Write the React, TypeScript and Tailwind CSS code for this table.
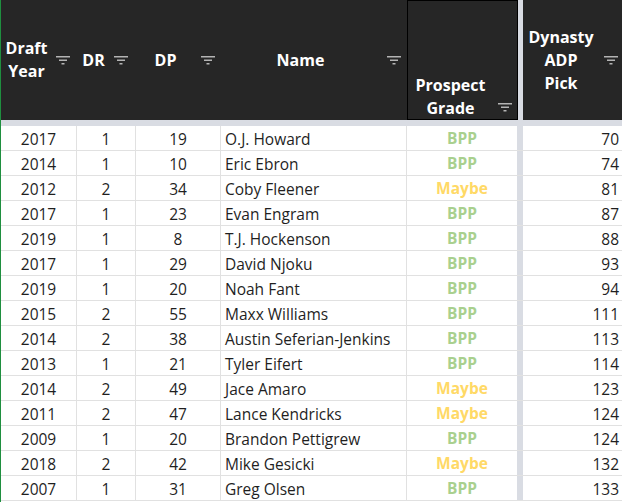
import React from 'react';

type Row = {
  year: number;
  dr: number;
  dp: number;
  name: string;
  grade: 'BPP' | 'Maybe';
  adp: number;
};

const ROWS: Row[] = [
  { year: 2017, dr: 1, dp: 19, name: 'O.J. Howard', grade: 'BPP', adp: 70 },
  { year: 2014, dr: 1, dp: 10, name: 'Eric Ebron', grade: 'BPP', adp: 74 },
  { year: 2012, dr: 2, dp: 34, name: 'Coby Fleener', grade: 'Maybe', adp: 81 },
  { year: 2017, dr: 1, dp: 23, name: 'Evan Engram', grade: 'BPP', adp: 87 },
  { year: 2019, dr: 1, dp: 8, name: 'T.J. Hockenson', grade: 'BPP', adp: 88 },
  { year: 2017, dr: 1, dp: 29, name: 'David Njoku', grade: 'BPP', adp: 93 },
  { year: 2019, dr: 1, dp: 20, name: 'Noah Fant', grade: 'BPP', adp: 94 },
  { year: 2015, dr: 2, dp: 55, name: 'Maxx Williams', grade: 'BPP', adp: 111 },
  { year: 2014, dr: 2, dp: 38, name: 'Austin Seferian-Jenkins', grade: 'BPP', adp: 113 },
  { year: 2013, dr: 1, dp: 21, name: 'Tyler Eifert', grade: 'BPP', adp: 114 },
  { year: 2014, dr: 2, dp: 49, name: 'Jace Amaro', grade: 'Maybe', adp: 123 },
  { year: 2011, dr: 2, dp: 47, name: 'Lance Kendricks', grade: 'Maybe', adp: 124 },
  { year: 2009, dr: 1, dp: 20, name: 'Brandon Pettigrew', grade: 'BPP', adp: 124 },
  { year: 2018, dr: 2, dp: 42, name: 'Mike Gesicki', grade: 'Maybe', adp: 132 },
  { year: 2007, dr: 1, dp: 31, name: 'Greg Olsen', grade: 'BPP', adp: 133 },
];

// フィルターボタンのアイコン
function FilterIcon() {
  return (
    <svg width="14" height="9" viewBox="0 0 14 9" className="shrink-0">
      <rect x="0" y="0" width="14" height="1.5" fill="#b4b4b4" />
      <rect x="3" y="3.5" width="8" height="1.5" fill="#b4b4b4" />
      <rect x="5.5" y="7" width="3" height="1.5" fill="#b4b4b4" />
    </svg>
  );
}

const headFont = "font-['Open_Sans',sans-serif] text-[16px] leading-[23px] font-bold text-white";
const bodyFont = "font-['Open_Sans',sans-serif] text-[15.5px] text-[#1f1f1f]";
const cell = 'flex items-center pt-[4px] border-r border-[#e1e1e1]';

export default function App() {
  return (
    <div className="w-[622px] h-[502px] overflow-hidden bg-white flex">
      {/* 左端の選択枠 */}
      <div className="w-px shrink-0 bg-[#1f8f3f]" />

      <div className="flex flex-col shrink-0">
        {/* ヘッダー */}
        <div className="flex h-[120px] bg-[#262626]">
          <div className="w-[76px] flex items-center pr-[7px]">
            <span className={`${headFont} flex-1 text-center pr-[4px]`}>
              Draft
              <br />
              Year
            </span>
            <FilterIcon />
          </div>
          <div className="w-[59px] flex items-center pr-[8px]">
            <span className={`${headFont} flex-1 text-center pr-[4px]`}>DR</span>
            <FilterIcon />
          </div>
          <div className="w-[85px] flex items-center pr-[6px]">
            <span className={`${headFont} flex-1 text-center pr-[6px]`}>DP</span>
            <FilterIcon />
          </div>
          <div className="w-[186px] flex items-center pr-[6px]">
            <span className={`${headFont} flex-1 text-center pr-[7px]`}>Name</span>
            <FilterIcon />
          </div>
          <div className="w-[111px] flex items-end border border-black pr-[5px]">
            <span className={`${headFont} flex-1 text-center pr-[5px] translate-y-[1px]`}>
              Prospect
              <br />
              Grade
            </span>
            <span className="mb-[7px]">
              <FilterIcon />
            </span>
          </div>
          <div className="w-[5px] bg-[#d9dce3]" />
          <div className="w-[100px] flex items-center pr-[5px]">
            <span className={`${headFont} flex-1 text-center pr-[5px]`}>
              Dynasty
              <br />
              ADP
              <br />
              Pick
            </span>
            <FilterIcon />
          </div>
        </div>

        {/* ヘッダー下の区切り */}
        <div className="h-[6px] bg-[#d9dce3]" />

        {/* データ行 */}
        {ROWS.map((r, i) => (
          <div key={i} className={`flex h-[25px] border-b border-[#e1e1e1] ${bodyFont}`}>
            <div className={`w-[76px] justify-center ${cell}`}>{r.year}</div>
            <div className={`w-[59px] justify-center ${cell}`}>{r.dr}</div>
            <div className={`w-[85px] justify-center ${cell}`}>{r.dp}</div>
            <div className={`w-[186px] pl-[4px] whitespace-nowrap ${cell}`}>{r.name}</div>
            <div className="w-[110px] flex items-center justify-center pt-[2px]">
              <span
                className={`font-bold text-[15.5px] ${
                  r.grade === 'BPP' ? 'text-[#a9d08e]' : 'text-[#ffd966]'
                }`}
              >
                {r.grade}
              </span>
            </div>
            <div className="w-[6px] bg-[#d9dce3]" />
            <div className="w-[100px] flex items-center justify-end pt-[4px] pr-[4px]">{r.adp}</div>
          </div>
        ))}
      </div>
    </div>
  );
}
